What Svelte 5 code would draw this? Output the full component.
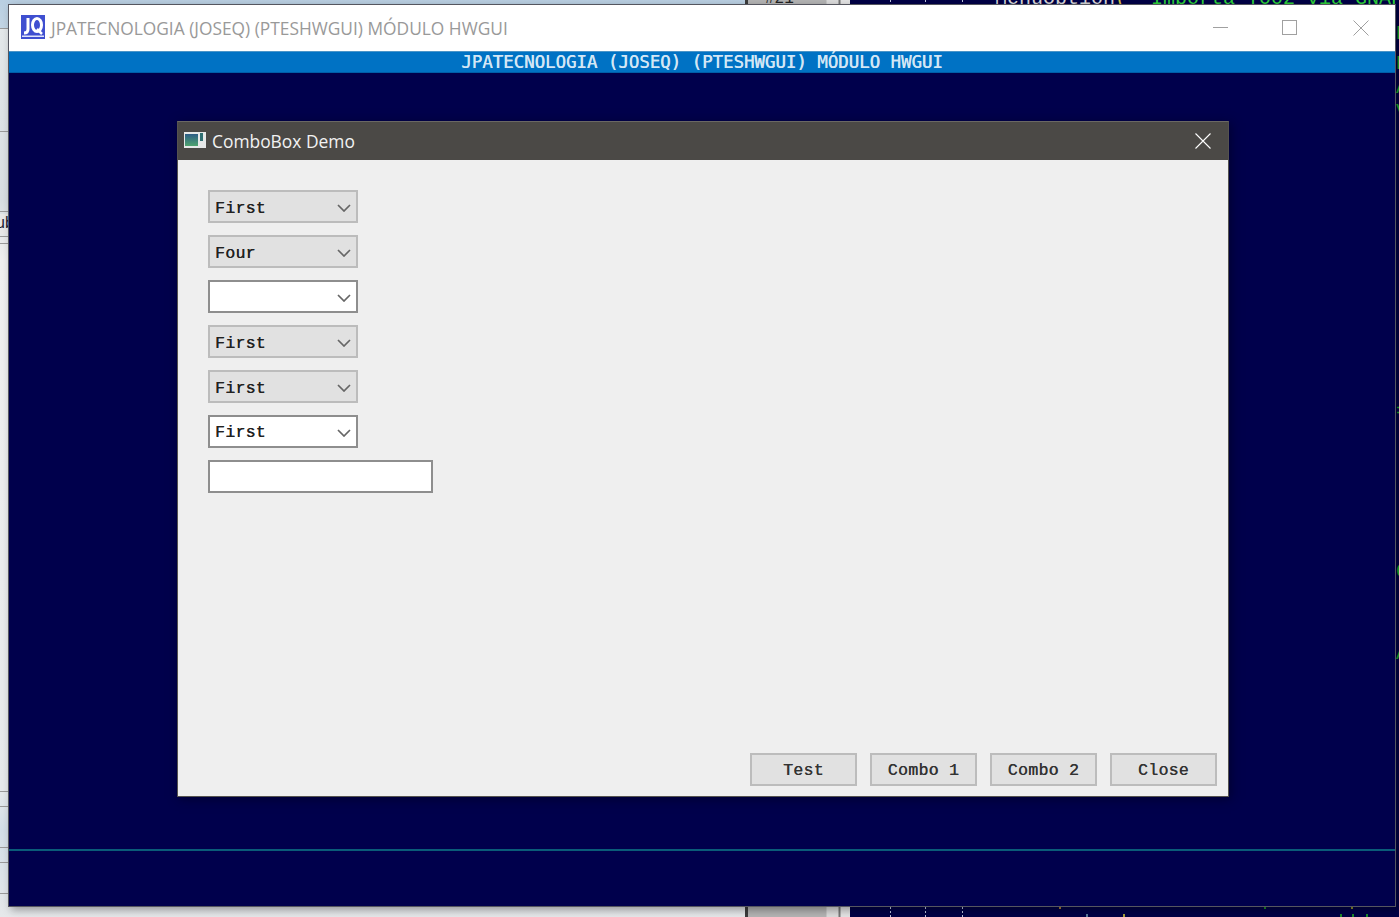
<script>
  const combos = [
    { text: "First", kind: "flat" },
    { text: "Four", kind: "flat" },
    { text: "", kind: "edit" },
    { text: "First", kind: "flat" },
    { text: "First", kind: "flat" },
    { text: "First", kind: "edit" },
  ];
  const buttons = ["Test", "Combo 1", "Combo 2", "Close"];
  const ticks = [
    { x: 1059, y: 906, c: "#a87a3a" },
    { x: 1264, y: 906, c: "#1c8a2a" },
    { x: 1351, y: 906, c: "#8a8a2a" },
    { x: 1086, y: 914, c: "#5a7a9a" },
    { x: 1123, y: 914, c: "#a8a03a" },
    { x: 1340, y: 914, c: "#1c8a2a" },
    { x: 1352, y: 914, c: "#1c8a2a" },
    { x: 1366, y: 914, c: "#1c8a2a" },
  ];
  const edgeCode = [
    { ch: "E", y: 24 },
    { ch: "E", y: 54 },
    { ch: "A", y: 78 },
    { ch: "V", y: 102 },
    { ch: "=", y: 402 },
    { ch: "C", y: 562 },
    { ch: "A", y: 644 },
  ];
  const leftLines = [28, 131, 211, 236, 243, 791, 806, 847, 862, 893];
  const dotted = [890, 925, 962];
</script>

<div class="desktop">
  <div class="bg-left"></div>
  <div class="bg-mid"></div>
  <div class="bg-code"></div>
  {#each leftLines as y}
    <i class="left-line" style="top: {y}px"></i>
  {/each}
  <div class="stray">ub</div>
  <div class="code-top">MenuOption<b class="paren">(</b> <b class="str">"Importa T002 via GNAF</b></div>
  <div class="code-num">#21</div>

  {#each dotted as x}
    <i class="dots top" style="left: {x}px"></i>
    <i class="dots bottom" style="left: {x}px"></i>
  {/each}

  {#each edgeCode as item}
    <span class="edge-code" style="top: {item.y}px">{item.ch}</span>
  {/each}

  {#each ticks as tick}
    <i class="tick" style="left: {tick.x}px; top: {tick.y}px; background: {tick.c}"></i>
  {/each}

  <div class="main-window">
    <header class="main-title">
      <div class="app-logo">
        <svg width="24" height="24" viewBox="0 0 24 24">
          <rect width="24" height="24" fill="#3f4fd0" />
          <path d="M7 3v11q0 4-4 4" fill="none" stroke="#fff" stroke-width="3" />
          <ellipse cx="16" cy="10" rx="4.5" ry="6.5" fill="none" stroke="#fff" stroke-width="3" />
          <path d="M16 14l5 5" stroke="#fff" stroke-width="2.5" />
          <rect x="1" y="20.5" width="22" height="1.5" fill="#dfe3fb" />
        </svg>
      </div>
      <span class="main-caption">JPATECNOLOGIA (JOSEQ) (PTESHWGUI) MÓDULO HWGUI</span>
      <div class="win-controls">
        <svg class="min" width="16" height="16" viewBox="0 0 16 16"><path d="M0 7.5h15" stroke="#a0a0a0" /></svg>
        <svg width="16" height="16" viewBox="0 0 16 16"><rect x="0.5" y="0.5" width="14" height="14" fill="none" stroke="#a0a0a0" /></svg>
        <svg class="close" width="16" height="16" viewBox="0 0 16 16"><path d="M0.5 0.5l15 15M15.5 0.5l-15 15" stroke="#a0a0a0" /></svg>
      </div>
    </header>
    <div class="blue-bar">JPATECNOLOGIA (JOSEQ) (PTESHWGUI) MÓDULO HWGUI</div>
    <div class="console">
      <div class="status-line"></div>
    </div>
  </div>

  <div class="dialog">
    <header class="dialog-title">
      <svg class="dialog-icon" width="22" height="16" viewBox="0 0 22 16">
        <rect width="22" height="16" fill="#e6e8e8" />
        <defs>
          <linearGradient id="pane" x1="0" y1="0" x2="0" y2="1">
            <stop offset="0" stop-color="#2d5d86" />
            <stop offset="1" stop-color="#4ea36f" />
          </linearGradient>
        </defs>
        <rect x="1" y="2" width="13" height="12" fill="url(#pane)" />
        <rect x="16" y="1" width="3" height="8" fill="#2f6f72" />
      </svg>
      <span class="dialog-caption">ComboBox Demo</span>
      <svg class="dialog-close" width="16" height="16" viewBox="0 0 16 16">
        <path d="M0.5 0.5l15 15M15.5 0.5l-15 15" stroke="#fff" stroke-width="1.1" />
      </svg>
    </header>

    <div class="dialog-body">
      <div class="fields">
        {#each combos as combo}
          <div class="combo {combo.kind}">
            <span>{combo.text}</span>
            <svg width="14" height="8" viewBox="0 0 14 8">
              <path d="M1 1l6 6 6-6" fill="none" stroke="#666" stroke-width="1.7" />
            </svg>
          </div>
        {/each}
        <div class="text-input"></div>
      </div>

      <div class="actions">
        {#each buttons as label}
          <button>{label}</button>
        {/each}
      </div>
    </div>
  </div>
</div>

<style>
  :global(body) {
    margin: 0;
  }

  .desktop {
    position: relative;
    width: 1399px;
    height: 917px;
    overflow: hidden;
    background: #00004c;
    font-family: "Open Sans", "Liberation Sans", sans-serif;
  }

  .bg-left {
    position: absolute;
    left: 0;
    top: 0;
    width: 745px;
    height: 917px;
    background: linear-gradient(#b9cfe2 0, #c3d5e4 28px, #e4e8ea 29px, #d8dee2 200px, #f0f0f0 260px, #e6e9eb 790px, #d3dfe8 830px, #e6e8ea 917px);
  }

  .bg-mid {
    position: absolute;
    left: 745px;
    top: 0;
    width: 105px;
    height: 917px;
    box-sizing: border-box;
    border-left: 3px solid #3c3c3c;
    background: linear-gradient(90deg, #b4b4b4 0, #b4b4b4 78px, #dcdcdc 79px, #dcdcdc 90px, #777 91px, #777 92px, #e4e4e4 93px);
  }

  .bg-code {
    position: absolute;
    left: 850px;
    top: 0;
    right: 0;
    bottom: 0;
    background: #000046;
  }

  .left-line {
    position: absolute;
    left: 0;
    width: 9px;
    height: 1px;
    background: #9a9a9a;
  }

  .stray {
    position: absolute;
    left: -4px;
    top: 214px;
    width: 12px;
    height: 20px;
    overflow: hidden;
    font: 16px "Liberation Sans", sans-serif;
    color: #223;
    background: #e8e8e8;
  }

  .code-top {
    position: absolute;
    left: 995px;
    top: -11px;
    font: 20px/20px "Liberation Mono", monospace;
    white-space: pre;
    color: #d6d6d6;
  }

  .code-top b {
    font-weight: normal;
  }

  .paren {
    color: #d8c040;
  }

  .str {
    color: #2fd03a;
  }

  .code-num {
    position: absolute;
    left: 765px;
    top: -9px;
    font: 16px/16px "Liberation Mono", monospace;
    color: #222;
  }

  .dots {
    position: absolute;
    width: 1px;
    background: repeating-linear-gradient(#bcc4dc 0, #bcc4dc 2px, transparent 2px, transparent 4px);
  }

  .dots.top {
    top: 0;
    height: 5px;
  }

  .dots.bottom {
    top: 907px;
    height: 10px;
  }

  .edge-code {
    position: absolute;
    left: 1396px;
    font: 20px/20px "Liberation Mono", monospace;
    color: #1eb02c;
  }

  .tick {
    position: absolute;
    width: 2px;
    height: 3px;
  }

  .main-window {
    position: absolute;
    left: 8px;
    top: 4px;
    width: 1388px;
    height: 903px;
    display: flex;
    flex-direction: column;
    box-sizing: border-box;
    border: 1px solid #55565f;
    box-shadow: 3px 3px 8px rgba(0, 0, 0, 0.35);
  }

  .main-title {
    height: 46px;
    background: #fff;
    display: flex;
    align-items: center;
    padding-left: 12px;
    flex-shrink: 0;
  }

  .app-logo {
    width: 24px;
    height: 24px;
    margin-top: -2px;
  }

  .main-caption {
    margin-left: 6px;
    font-size: 17.35px;
    color: #999;
    white-space: nowrap;
  }

  .win-controls {
    margin-left: auto;
    display: flex;
    gap: 54px;
    padding-right: 26px;
  }

  .win-controls .min {
    margin-right: -1px;
  }

  .win-controls .close {
    margin-left: 1px;
  }

  .blue-bar {
    height: 22px;
    box-sizing: border-box;
    background: #0072c4;
    border-top: 1px solid #4a94c8;
    border-bottom: 1px solid #005ea8;
    color: #d3e6f5;
    text-align: center;
    font: 17.4px/21px "DejaVu Sans Mono", monospace;
    text-shadow: 0.4px 0 0 #d3e6f5;
    white-space: nowrap;
    flex-shrink: 0;
  }

  .console {
    flex: 1;
    background: #00004c;
    position: relative;
  }

  .status-line {
    position: absolute;
    left: 0;
    right: 0;
    top: 776px;
    height: 2px;
    background: #0a5c78;
  }

  .dialog {
    position: absolute;
    left: 177px;
    top: 121px;
    width: 1052px;
    height: 676px;
    display: flex;
    flex-direction: column;
    box-sizing: border-box;
    border: 1px solid #55534f;
    border-top-color: #6a6864;
    box-shadow: 2px 2px 10px rgba(0, 0, 30, 0.6);
  }

  .dialog-title {
    height: 38px;
    flex-shrink: 0;
    background: #4b4946;
    display: flex;
    align-items: center;
    padding-left: 6px;
    color: #fff;
  }

  .dialog-icon {
    margin-top: -3px;
  }

  .dialog-caption {
    margin-left: 6px;
    font-size: 17.4px;
    color: #f2f2f2;
  }

  .dialog-close {
    margin-left: auto;
    margin-right: 17px;
  }

  .dialog-body {
    flex: 1;
    background: #efefef;
    display: flex;
    flex-direction: column;
    justify-content: space-between;
    padding: 30px 11px 10px 30px;
  }

  .fields {
    display: flex;
    flex-direction: column;
    gap: 12px;
    align-items: flex-start;
  }

  .combo {
    width: 150px;
    height: 33px;
    box-sizing: border-box;
    display: flex;
    align-items: center;
    justify-content: space-between;
    padding: 0 5px 0 5px;
    font: 16.5px "Liberation Mono", "Courier New", monospace;
    letter-spacing: 0.3px;
    color: #222;
    text-shadow: 0.3px 0 0 #222;
  }

  .combo svg {
    flex-shrink: 0;
    margin-top: 2px;
  }

  .combo span {
    margin-top: 1px;
  }

  .combo.flat {
    background: #e1e1e1;
    border: 2px solid #bcbcbc;
  }

  .combo.flat span {
    margin-top: 3px;
  }

  .combo.edit {
    background: #fff;
    border: 2px solid #8e8e8e;
  }

  .text-input {
    width: 225px;
    height: 33px;
    box-sizing: border-box;
    background: #fff;
    border: 2px solid #8e8e8e;
  }

  .actions {
    display: flex;
    justify-content: flex-end;
    gap: 13px;
  }

  button {
    width: 107px;
    height: 33px;
    box-sizing: border-box;
    background: #e1e1e1;
    border: 2px solid #bcbcbc;
    border-radius: 0;
    padding: 2px 0 0;
    font: 16.5px "Liberation Mono", "Courier New", monospace;
    letter-spacing: 0.3px;
    color: #333;
    text-shadow: 0.3px 0 0 #333;
  }
</style>
